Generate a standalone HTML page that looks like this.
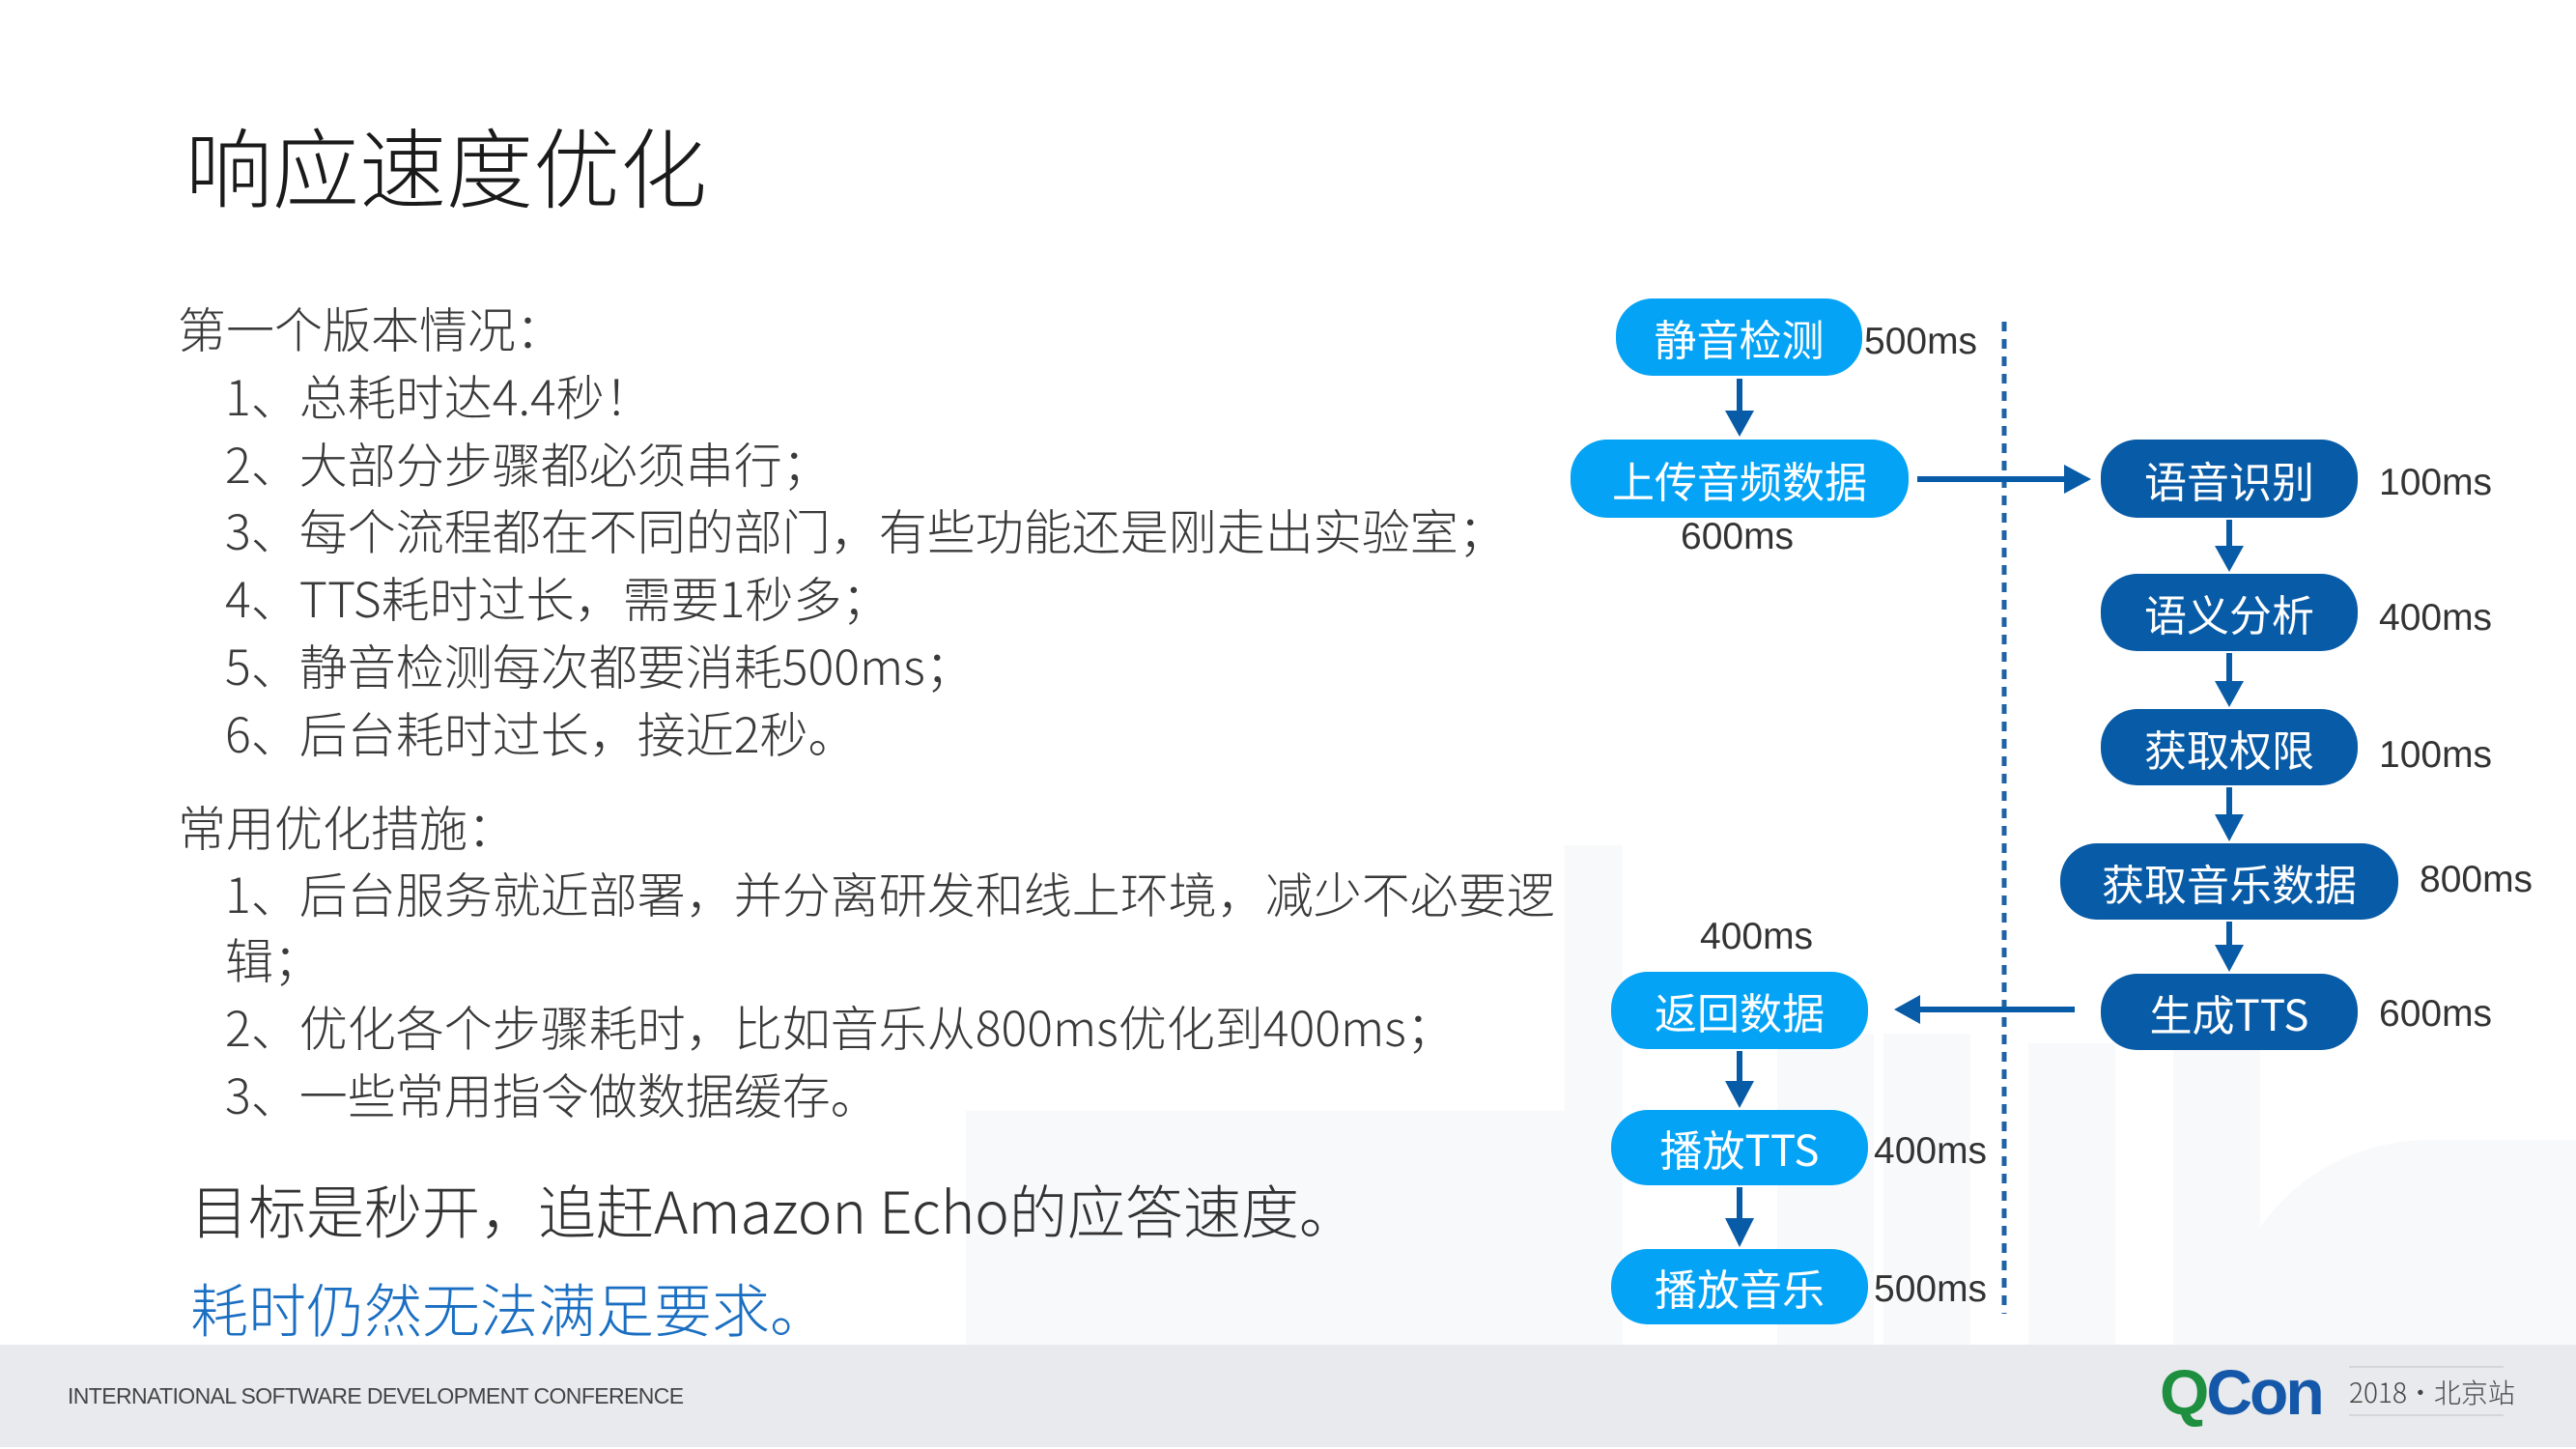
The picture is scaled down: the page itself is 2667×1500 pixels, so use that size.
<!DOCTYPE html>
<html><head><meta charset="utf-8"><style>
*{margin:0;padding:0;box-sizing:border-box}
body{width:2667px;height:1500px;position:relative;background:#fff;overflow:hidden;font-family:"Liberation Sans","Noto Sans CJK SC",sans-serif;color:#3a3a3a}
.t{position:absolute;white-space:nowrap;font-family:"Noto Sans CJK SC","Liberation Sans",sans-serif;font-weight:300;line-height:1}
.b{position:absolute;border-radius:38px;color:#fff;font-family:"Noto Sans CJK SC",sans-serif;font-size:44px;display:flex;align-items:center;justify-content:center;font-weight:400}
.l{background:#05a3f5}.d{background:#085ba6}
.ms{position:absolute;font-family:"Liberation Sans",sans-serif;font-size:39px;color:#333;line-height:1}
.bg{position:absolute;background:#f8f9fa}
</style></head><body>
<div class="bg" style="left:1620px;top:875px;width:60px;height:520px"></div>
<div class="bg" style="left:1840px;top:1070px;width:100px;height:325px"></div>
<div class="bg" style="left:1950px;top:1070px;width:90px;height:325px"></div>
<div class="bg" style="left:2100px;top:1080px;width:90px;height:315px"></div>
<div class="bg" style="left:2250px;top:1080px;width:90px;height:315px"></div>
<div class="bg" style="left:2300px;top:1180px;width:367px;height:215px;border-radius:300px 0 0 0"></div>
<div class="bg" style="left:1000px;top:1150px;width:620px;height:245px"></div>

<div class="t" style="left:192px;top:124px;font-size:90px;color:#1a1a1a">响应速度优化</div>
<div class="t" style="left:184px;top:314px;font-size:50px">第一个版本情况：</div>
<div class="t" style="left:233px;top:384px;font-size:50px">1、总耗时达4.4秒！</div>
<div class="t" style="left:233px;top:454px;font-size:50px">2、大部分步骤都必须串行；</div>
<div class="t" style="left:233px;top:523px;font-size:50px">3、每个流程都在不同的部门，有些功能还是刚走出实验室；</div>
<div class="t" style="left:233px;top:593px;font-size:50px">4、TTS耗时过长，需要1秒多；</div>
<div class="t" style="left:233px;top:663px;font-size:50px">5、静音检测每次都要消耗500ms；</div>
<div class="t" style="left:233px;top:733px;font-size:50px">6、后台耗时过长，接近2秒。</div>
<div class="t" style="left:184px;top:830px;font-size:50px">常用优化措施：</div>
<div class="t" style="left:233px;top:899px;font-size:50px">1、后台服务就近部署，并分离研发和线上环境，减少不必要逻</div>
<div class="t" style="left:233px;top:967px;font-size:50px">辑；</div>
<div class="t" style="left:233px;top:1037px;font-size:50px">2、优化各个步骤耗时，比如音乐从800ms优化到400ms；</div>
<div class="t" style="left:233px;top:1107px;font-size:50px">3、一些常用指令做数据缓存。</div>
<div class="t" style="left:197px;top:1222px;font-size:60px;color:#333">目标是秒开，追赶Amazon Echo的应答速度。</div>
<div class="t" style="left:197px;top:1324px;font-size:60px;color:#1b6fc2">耗时仍然无法满足要求。</div>

<svg style="position:absolute;left:0;top:0" width="2667" height="1500">
<line x1="2075" y1="333" x2="2075" y2="1360" stroke="#1f63a6" stroke-width="5" stroke-dasharray="10,8"/>
<g stroke="#085ba6" stroke-width="6" fill="#085ba6">
<line x1="1801" y1="392" x2="1801" y2="428"/><polygon points="1786,425 1816,425 1801,452" stroke="none"/>
<line x1="1985" y1="496" x2="2140" y2="496"/><polygon points="2137,481 2137,511 2165,496" stroke="none"/>
<line x1="2308" y1="538" x2="2308" y2="568"/><polygon points="2293,565 2323,565 2308,592" stroke="none"/>
<line x1="2308" y1="676" x2="2308" y2="708"/><polygon points="2293,705 2323,705 2308,732" stroke="none"/>
<line x1="2308" y1="815" x2="2308" y2="846"/><polygon points="2293,843 2323,843 2308,871" stroke="none"/>
<line x1="2308" y1="954" x2="2308" y2="981"/><polygon points="2293,978 2323,978 2308,1006" stroke="none"/>
<line x1="2148" y1="1045" x2="1985" y2="1045"/><polygon points="1988,1030 1988,1060 1961,1045" stroke="none"/>
<line x1="1801" y1="1088" x2="1801" y2="1122"/><polygon points="1786,1119 1816,1119 1801,1147" stroke="none"/>
<line x1="1801" y1="1229" x2="1801" y2="1264"/><polygon points="1786,1261 1816,1261 1801,1291" stroke="none"/>
</g></svg>

<div class="b l" style="left:1673px;top:309px;width:255px;height:80px">静音检测</div>
<div class="ms" style="left:1930px;top:334px">500ms</div>
<div class="b l" style="left:1626px;top:455px;width:350px;height:81px">上传音频数据</div>
<div class="ms" style="left:1740px;top:536px">600ms</div>
<div class="b d" style="left:2175px;top:455px;width:266px;height:81px">语音识别</div>
<div class="ms" style="left:2463px;top:480px">100ms</div>
<div class="b d" style="left:2175px;top:594px;width:266px;height:80px">语义分析</div>
<div class="ms" style="left:2463px;top:620px">400ms</div>
<div class="b d" style="left:2175px;top:734px;width:266px;height:79px">获取权限</div>
<div class="ms" style="left:2463px;top:762px">100ms</div>
<div class="b d" style="left:2133px;top:873px;width:350px;height:79px">获取音乐数据</div>
<div class="ms" style="left:2505px;top:891px">800ms</div>
<div class="b d" style="left:2175px;top:1008px;width:266px;height:79px">生成TTS</div>
<div class="ms" style="left:2463px;top:1030px">600ms</div>
<div class="ms" style="left:1760px;top:950px">400ms</div>
<div class="b l" style="left:1668px;top:1006px;width:266px;height:80px">返回数据</div>
<div class="b l" style="left:1668px;top:1149px;width:266px;height:78px">播放TTS</div>
<div class="ms" style="left:1940px;top:1172px">400ms</div>
<div class="b l" style="left:1668px;top:1293px;width:266px;height:78px">播放音乐</div>
<div class="ms" style="left:1940px;top:1315px">500ms</div>

<div style="position:absolute;left:0;top:1392px;width:2667px;height:106px;background:#e8eaed"></div>
<div class="t" style="left:70px;top:1434px;font-size:23px;font-family:'Liberation Sans',sans-serif;color:#444;letter-spacing:-0.6px">INTERNATIONAL SOFTWARE DEVELOPMENT CONFERENCE</div>
<div style="position:absolute;left:2236px;top:1408px;font-family:'Liberation Sans',sans-serif;font-weight:bold;font-size:66px;line-height:1;letter-spacing:-3px"><span style="color:#1e8f3e">Q</span><span style="color:#1557a8">Con</span></div>
<div style="position:absolute;left:2432px;top:1414px;width:160px;height:2px;background:#d4d6d8"></div>
<div style="position:absolute;left:2432px;top:1464px;width:160px;height:2px;background:#d4d6d8"></div>
<div class="t" style="left:2432px;top:1427px;font-size:28px;color:#444">2018·北京站</div>
</body></html>
